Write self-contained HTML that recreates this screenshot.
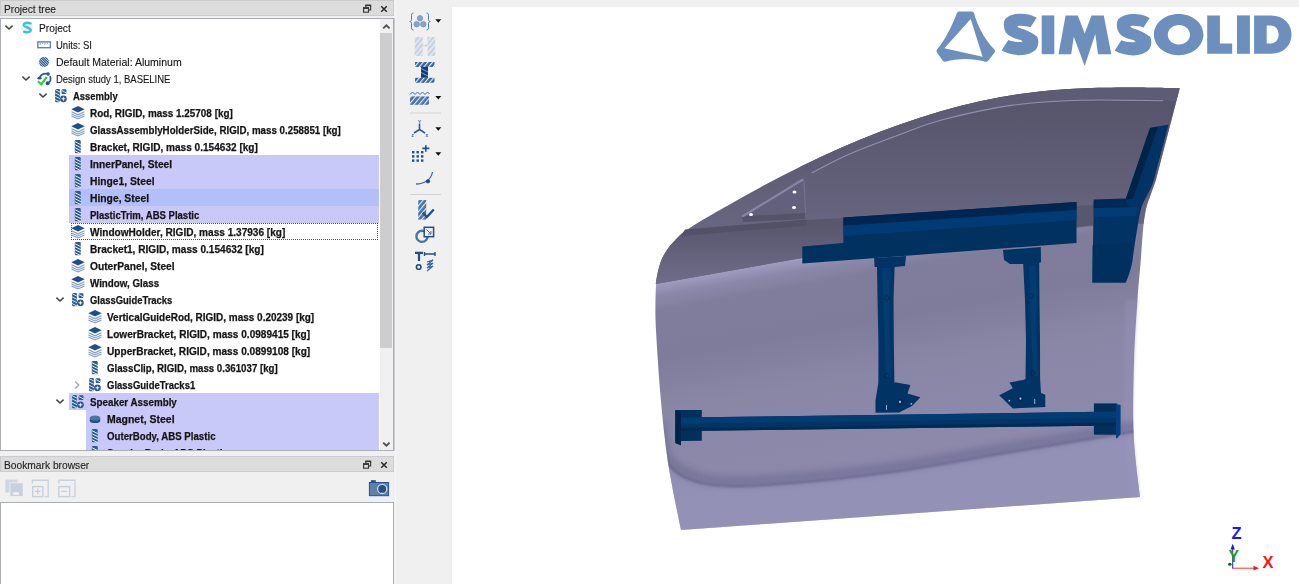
<!DOCTYPE html>
<html><head><meta charset="utf-8">
<style>
html,body{margin:0;padding:0}
body{width:1299px;height:584px;position:relative;overflow:hidden;background:#f0f0f0;font-family:"Liberation Sans",sans-serif;}
.abs{position:absolute}
.hdr{position:absolute;left:0;width:392px;height:14px;background:#dcdcdc;border:1px solid #cbcbcb}
.hdr .ht{position:absolute;left:3px;top:1px;font-size:11px;line-height:15px;color:#1e1e1e;-webkit-text-stroke:0.12px #1e1e1e;transform-origin:0 0;white-space:nowrap}
.box{position:absolute;left:0;width:392px;background:#fff;border:1px solid #abaeb6}
.t{position:absolute;font-size:11px;line-height:17px;height:17px;color:#141414;-webkit-text-stroke:0.12px #141414;white-space:nowrap;transform-origin:0 0}
.b{font-weight:bold;-webkit-text-stroke:0.25px #141414}
.bg{position:absolute;height:17px}
.focus{position:absolute;height:15px;border:1px dotted #505050}
.ic{position:absolute;overflow:visible}
</style></head><body>
<!-- Project tree header -->
<div class="hdr" style="top:0">
  <div class="ht" style="transform:scaleX(0.924)">Project tree</div>
  <svg class="ic" style="left:361px;top:3px" width="10" height="10" viewBox="0 0 10 10"><path d="M3.8,3 V1.2 H8.6 V6 H6.6" fill="none" stroke="#333" stroke-width="1.1"/><rect x="1.6" y="3.8" width="4.9" height="4.4" fill="none" stroke="#333" stroke-width="1.1"/><rect x="1.1" y="3.3" width="5.9" height="1.6" fill="#333"/><rect x="3.3" y="0.7" width="5.8" height="1.4" fill="#333"/></svg>
  <svg class="ic" style="left:378px;top:3px" width="10" height="10" viewBox="0 0 10 10"><path d="M2.2,2.2 L7.8,7.8 M7.8,2.2 L2.2,7.8" stroke="#2a2a2a" stroke-width="1.5"/></svg>
</div>
<!-- Tree box -->
<div class="box" style="top:18px;height:431px;overflow:hidden">
  <div class="abs" style="left:-1px;top:-19px;width:394px;height:470px">
<svg class="ic" style="left:4px;top:22.2px" width="10" height="10" viewBox="0 0 10 10"><path d="M1.4,3.6 L5,7 L8.6,3.6" fill="none" stroke="#454545" stroke-width="1.5"/></svg>
<svg class="ic" style="left:19px;top:19.5px" width="16" height="16" viewBox="0 0 16 16"><circle cx="8" cy="7.5" r="6" fill="#f1f2f3"/><path transform="translate(8.2,7.6) scale(0.88) translate(-8.2,-7.4)" d="M12,2.7 C8.5,1.3 4.2,1.9 4.4,4.6 C4.7,7.2 12.2,7.4 12.2,10.2 C12.2,12.7 7.5,13.2 4.8,12.1" fill="none" stroke="#3ec3d4" stroke-width="2.8" stroke-linecap="round"/></svg>
<div class="t" style="left:38.7px;top:20px;transform:scaleX(0.928)">Project</div>
<svg class="ic" style="left:36px;top:36.5px" width="16" height="16" viewBox="0 0 16 16"><rect x="1.8" y="4.9" width="12.6" height="5.8" fill="#fff" stroke="#5f83b0" stroke-width="1.4"/><path d="M4.2,5.6 v2.2 M6.6,5.6 v1.5 M9,5.6 v2.2 M11.4,5.6 v1.5" stroke="#7f9cc2" stroke-width="1"/></svg>
<div class="t" style="left:55.7px;top:37px;transform:scaleX(0.863)">Units: SI</div>
<svg class="ic" style="left:36px;top:53.5px" width="16" height="16" viewBox="0 0 16 16"><defs><clipPath id="cm"><circle cx="8" cy="8" r="4.9"/></clipPath></defs><circle cx="8" cy="8" r="4.9" fill="#2f5e96"/><g clip-path="url(#cm)" stroke="#dfe7f1" stroke-width="0.8"><path d="M0,-5 L16,11 M0,-2.5 L16,13.5 M0,0 L16,16 M0,2.5 L16,18.5 M0,5 L16,21"/></g></svg>
<div class="t" style="left:55.7px;top:54px;transform:scaleX(0.956)">Default Material: Aluminum</div>
<svg class="ic" style="left:21px;top:73.2px" width="10" height="10" viewBox="0 0 10 10"><path d="M1.4,3.6 L5,7 L8.6,3.6" fill="none" stroke="#454545" stroke-width="1.5"/></svg>
<svg class="ic" style="left:36px;top:70.5px" width="16" height="16" viewBox="0 0 16 16"><g fill="none" stroke="#215a9a" stroke-width="1.7"><path d="M3.6,6.4 C5,3.6 8.5,2.2 12,2.7"/><path d="M14,5.2 C15,7.6 14.6,10.4 12.4,12"/></g><g fill="#215a9a"><ellipse cx="3.5" cy="7.2" rx="2.1" ry="1.4"/><circle cx="12.2" cy="3" r="1.7"/><circle cx="11.6" cy="12.3" r="2"/></g><path d="M2,10.2 L5.3,13.3 L10.8,6" fill="none" stroke="#3cc83c" stroke-width="2.2"/></svg>
<div class="t" style="left:55.7px;top:71px;transform:scaleX(0.862)">Design study 1, BASELINE</div>
<svg class="ic" style="left:38px;top:90.2px" width="10" height="10" viewBox="0 0 10 10"><path d="M1.4,3.6 L5,7 L8.6,3.6" fill="none" stroke="#454545" stroke-width="1.5"/></svg>
<svg class="ic" style="left:53px;top:87.5px" width="16" height="16" viewBox="0 0 16 16"><g fill="#2a5a94"><rect x="2.1" y="1" width="4.8" height="13.2" rx="1"/><rect x="8.6" y="1.3" width="4.8" height="4.8" rx="1"/><circle cx="10.4" cy="10.8" r="3.4"/></g><path d="M2.1,1.6 L6.9,4.1 M2.1,4.9 L6.9,7.4 M2.1,8.2 L6.9,10.7 M2.1,11.5 L6.9,14 M8.6,2.4 L13.4,4.9" stroke="#f2f5fa" stroke-width="0.9"/><path d="M10.4,8.4 L11,10.2 L12.8,10.8 L11,11.4 L10.4,13.2 L9.8,11.4 L8,10.8 L9.8,10.2 Z" fill="#fff"/></svg>
<div class="t b" style="left:72.7px;top:88px;transform:scaleX(0.860)">Assembly</div>
<svg class="ic" style="left:70px;top:104.5px" width="16" height="16" viewBox="0 0 16 16"><path d="M1.3,4.3 L8,1.1 L14.7,4.3 L8,7.5 Z" fill="#1f4f88"/><path d="M1.5,6.7 L8,9.8 L14.5,6.7 M1.5,8.9 L8,12 L14.5,8.9 M1.5,11.1 L8,13.9 L14.5,11.1" fill="none" stroke="#7e9bc4" stroke-width="1.1"/></svg>
<div class="t b" style="left:89.7px;top:105px;transform:scaleX(0.902)">Rod, RIGID, mass 1.25708 [kg]</div>
<svg class="ic" style="left:70px;top:121.5px" width="16" height="16" viewBox="0 0 16 16"><path d="M1.3,4.3 L8,1.1 L14.7,4.3 L8,7.5 Z" fill="#1f4f88"/><path d="M1.5,6.7 L8,9.8 L14.5,6.7 M1.5,8.9 L8,12 L14.5,8.9 M1.5,11.1 L8,13.9 L14.5,11.1" fill="none" stroke="#7e9bc4" stroke-width="1.1"/></svg>
<div class="t b" style="left:89.7px;top:122px;transform:scaleX(0.886)">GlassAssemblyHolderSide, RIGID, mass 0.258851 [kg]</div>
<svg class="ic" style="left:70px;top:138.5px" width="16" height="16" viewBox="0 0 16 16"><rect x="4.8" y="1" width="5.9" height="13.3" rx="1.2" fill="#2b5b92"/><path d="M4.8,2.6 L10.7,5.6 M4.8,5.6 L10.7,8.6 M4.8,8.6 L10.7,11.6 M4.8,11.6 L10.7,14.6" stroke="#eef2f8" stroke-width="1"/></svg>
<div class="t b" style="left:89.7px;top:139px;transform:scaleX(0.915)">Bracket, RIGID, mass 0.154632 [kg]</div>
<div class="bg" style="left:69px;top:155px;width:310px;background:#c9c9f9"></div>
<svg class="ic" style="left:70px;top:155.5px" width="16" height="16" viewBox="0 0 16 16"><rect x="4.8" y="1" width="5.9" height="13.3" rx="1.2" fill="#2b5b92"/><path d="M4.8,2.6 L10.7,5.6 M4.8,5.6 L10.7,8.6 M4.8,8.6 L10.7,11.6 M4.8,11.6 L10.7,14.6" stroke="#eef2f8" stroke-width="1"/></svg>
<div class="t b" style="left:89.7px;top:156px;transform:scaleX(0.926)">InnerPanel, Steel</div>
<div class="bg" style="left:69px;top:172px;width:310px;background:#c9c9f9"></div>
<svg class="ic" style="left:70px;top:172.5px" width="16" height="16" viewBox="0 0 16 16"><rect x="4.8" y="1" width="5.9" height="13.3" rx="1.2" fill="#2b5b92"/><path d="M4.8,2.6 L10.7,5.6 M4.8,5.6 L10.7,8.6 M4.8,8.6 L10.7,11.6 M4.8,11.6 L10.7,14.6" stroke="#eef2f8" stroke-width="1"/></svg>
<div class="t b" style="left:89.7px;top:173px;transform:scaleX(0.935)">Hinge1, Steel</div>
<div class="bg" style="left:69px;top:189px;width:310px;background:#b3bff9"></div>
<svg class="ic" style="left:70px;top:189.5px" width="16" height="16" viewBox="0 0 16 16"><rect x="4.8" y="1" width="5.9" height="13.3" rx="1.2" fill="#2b5b92"/><path d="M4.8,2.6 L10.7,5.6 M4.8,5.6 L10.7,8.6 M4.8,8.6 L10.7,11.6 M4.8,11.6 L10.7,14.6" stroke="#eef2f8" stroke-width="1"/></svg>
<div class="t b" style="left:89.7px;top:190px;transform:scaleX(0.937)">Hinge, Steel</div>
<div class="bg" style="left:69px;top:206px;width:310px;background:#c9c9f9"></div>
<svg class="ic" style="left:70px;top:206.5px" width="16" height="16" viewBox="0 0 16 16"><rect x="4.8" y="1" width="5.9" height="13.3" rx="1.2" fill="#2b5b92"/><path d="M4.8,2.6 L10.7,5.6 M4.8,5.6 L10.7,8.6 M4.8,8.6 L10.7,11.6 M4.8,11.6 L10.7,14.6" stroke="#eef2f8" stroke-width="1"/></svg>
<div class="t b" style="left:89.7px;top:207px;transform:scaleX(0.866)">PlasticTrim, ABS Plastic</div>
<div class="focus" style="left:71px;top:223px;width:305px"></div>
<svg class="ic" style="left:70px;top:223.5px" width="16" height="16" viewBox="0 0 16 16"><path d="M1.3,4.3 L8,1.1 L14.7,4.3 L8,7.5 Z" fill="#1f4f88"/><path d="M1.5,6.7 L8,9.8 L14.5,6.7 M1.5,8.9 L8,12 L14.5,8.9 M1.5,11.1 L8,13.9 L14.5,11.1" fill="none" stroke="#7e9bc4" stroke-width="1.1"/></svg>
<div class="t b" style="left:89.7px;top:224px;transform:scaleX(0.916)">WindowHolder, RIGID, mass 1.37936 [kg]</div>
<svg class="ic" style="left:70px;top:240.5px" width="16" height="16" viewBox="0 0 16 16"><rect x="4.8" y="1" width="5.9" height="13.3" rx="1.2" fill="#2b5b92"/><path d="M4.8,2.6 L10.7,5.6 M4.8,5.6 L10.7,8.6 M4.8,8.6 L10.7,11.6 M4.8,11.6 L10.7,14.6" stroke="#eef2f8" stroke-width="1"/></svg>
<div class="t b" style="left:89.7px;top:241px;transform:scaleX(0.917)">Bracket1, RIGID, mass 0.154632 [kg]</div>
<svg class="ic" style="left:70px;top:257.5px" width="16" height="16" viewBox="0 0 16 16"><path d="M1.3,4.3 L8,1.1 L14.7,4.3 L8,7.5 Z" fill="#1f4f88"/><path d="M1.5,6.7 L8,9.8 L14.5,6.7 M1.5,8.9 L8,12 L14.5,8.9 M1.5,11.1 L8,13.9 L14.5,11.1" fill="none" stroke="#7e9bc4" stroke-width="1.1"/></svg>
<div class="t b" style="left:89.7px;top:258px;transform:scaleX(0.929)">OuterPanel, Steel</div>
<svg class="ic" style="left:70px;top:274.5px" width="16" height="16" viewBox="0 0 16 16"><path d="M1.3,4.3 L8,1.1 L14.7,4.3 L8,7.5 Z" fill="#1f4f88"/><path d="M1.5,6.7 L8,9.8 L14.5,6.7 M1.5,8.9 L8,12 L14.5,8.9 M1.5,11.1 L8,13.9 L14.5,11.1" fill="none" stroke="#7e9bc4" stroke-width="1.1"/></svg>
<div class="t b" style="left:89.7px;top:275px;transform:scaleX(0.890)">Window, Glass</div>
<svg class="ic" style="left:55px;top:294.2px" width="10" height="10" viewBox="0 0 10 10"><path d="M1.4,3.6 L5,7 L8.6,3.6" fill="none" stroke="#454545" stroke-width="1.5"/></svg>
<svg class="ic" style="left:70px;top:291.5px" width="16" height="16" viewBox="0 0 16 16"><g fill="#2a5a94"><rect x="2.1" y="1" width="4.8" height="13.2" rx="1"/><rect x="8.6" y="1.3" width="4.8" height="4.8" rx="1"/><circle cx="10.4" cy="10.8" r="3.4"/></g><path d="M2.1,1.6 L6.9,4.1 M2.1,4.9 L6.9,7.4 M2.1,8.2 L6.9,10.7 M2.1,11.5 L6.9,14 M8.6,2.4 L13.4,4.9" stroke="#f2f5fa" stroke-width="0.9"/><path d="M10.4,8.4 L11,10.2 L12.8,10.8 L11,11.4 L10.4,13.2 L9.8,11.4 L8,10.8 L9.8,10.2 Z" fill="#fff"/></svg>
<div class="t b" style="left:89.7px;top:292px;transform:scaleX(0.858)">GlassGuideTracks</div>
<svg class="ic" style="left:87px;top:308.5px" width="16" height="16" viewBox="0 0 16 16"><path d="M1.3,4.3 L8,1.1 L14.7,4.3 L8,7.5 Z" fill="#1f4f88"/><path d="M1.5,6.7 L8,9.8 L14.5,6.7 M1.5,8.9 L8,12 L14.5,8.9 M1.5,11.1 L8,13.9 L14.5,11.1" fill="none" stroke="#7e9bc4" stroke-width="1.1"/></svg>
<div class="t b" style="left:106.7px;top:309px;transform:scaleX(0.906)">VerticalGuideRod, RIGID, mass 0.20239 [kg]</div>
<svg class="ic" style="left:87px;top:325.5px" width="16" height="16" viewBox="0 0 16 16"><path d="M1.3,4.3 L8,1.1 L14.7,4.3 L8,7.5 Z" fill="#1f4f88"/><path d="M1.5,6.7 L8,9.8 L14.5,6.7 M1.5,8.9 L8,12 L14.5,8.9 M1.5,11.1 L8,13.9 L14.5,11.1" fill="none" stroke="#7e9bc4" stroke-width="1.1"/></svg>
<div class="t b" style="left:106.7px;top:326px;transform:scaleX(0.915)">LowerBracket, RIGID, mass 0.0989415 [kg]</div>
<svg class="ic" style="left:87px;top:342.5px" width="16" height="16" viewBox="0 0 16 16"><path d="M1.3,4.3 L8,1.1 L14.7,4.3 L8,7.5 Z" fill="#1f4f88"/><path d="M1.5,6.7 L8,9.8 L14.5,6.7 M1.5,8.9 L8,12 L14.5,8.9 M1.5,11.1 L8,13.9 L14.5,11.1" fill="none" stroke="#7e9bc4" stroke-width="1.1"/></svg>
<div class="t b" style="left:106.7px;top:343px;transform:scaleX(0.918)">UpperBracket, RIGID, mass 0.0899108 [kg]</div>
<svg class="ic" style="left:87px;top:359.5px" width="16" height="16" viewBox="0 0 16 16"><rect x="4.8" y="1" width="5.9" height="13.3" rx="1.2" fill="#2b5b92"/><path d="M4.8,2.6 L10.7,5.6 M4.8,5.6 L10.7,8.6 M4.8,8.6 L10.7,11.6 M4.8,11.6 L10.7,14.6" stroke="#eef2f8" stroke-width="1"/></svg>
<div class="t b" style="left:106.7px;top:360px;transform:scaleX(0.881)">GlassClip, RIGID, mass 0.361037 [kg]</div>
<svg class="ic" style="left:72px;top:379.8px" width="10" height="10" viewBox="0 0 10 10"><path d="M3.2,1.4 L6.8,5 L3.2,8.6" fill="none" stroke="#a8a8a8" stroke-width="1.4"/></svg>
<svg class="ic" style="left:87px;top:376.5px" width="16" height="16" viewBox="0 0 16 16"><g fill="#2a5a94"><rect x="2.1" y="1" width="4.8" height="13.2" rx="1"/><rect x="8.6" y="1.3" width="4.8" height="4.8" rx="1"/><circle cx="10.4" cy="10.8" r="3.4"/></g><path d="M2.1,1.6 L6.9,4.1 M2.1,4.9 L6.9,7.4 M2.1,8.2 L6.9,10.7 M2.1,11.5 L6.9,14 M8.6,2.4 L13.4,4.9" stroke="#f2f5fa" stroke-width="0.9"/><path d="M10.4,8.4 L11,10.2 L12.8,10.8 L11,11.4 L10.4,13.2 L9.8,11.4 L8,10.8 L9.8,10.2 Z" fill="#fff"/></svg>
<div class="t b" style="left:106.7px;top:377px;transform:scaleX(0.864)">GlassGuideTracks1</div>
<div class="bg" style="left:69px;top:393px;width:310px;background:#c9c9f9"></div>
<svg class="ic" style="left:55px;top:396.2px" width="10" height="10" viewBox="0 0 10 10"><path d="M1.4,3.6 L5,7 L8.6,3.6" fill="none" stroke="#454545" stroke-width="1.5"/></svg>
<svg class="ic" style="left:70px;top:393.5px" width="16" height="16" viewBox="0 0 16 16"><g fill="#2a5a94"><rect x="2.1" y="1" width="4.8" height="13.2" rx="1"/><rect x="8.6" y="1.3" width="4.8" height="4.8" rx="1"/><circle cx="10.4" cy="10.8" r="3.4"/></g><path d="M2.1,1.6 L6.9,4.1 M2.1,4.9 L6.9,7.4 M2.1,8.2 L6.9,10.7 M2.1,11.5 L6.9,14 M8.6,2.4 L13.4,4.9" stroke="#f2f5fa" stroke-width="0.9"/><path d="M10.4,8.4 L11,10.2 L12.8,10.8 L11,11.4 L10.4,13.2 L9.8,11.4 L8,10.8 L9.8,10.2 Z" fill="#fff"/></svg>
<div class="t b" style="left:89.7px;top:394px;transform:scaleX(0.891)">Speaker Assembly</div>
<div class="bg" style="left:86px;top:410px;width:293px;background:#c9c9f9"></div>
<svg class="ic" style="left:87px;top:410.5px" width="16" height="16" viewBox="0 0 16 16"><ellipse cx="8" cy="9.5" rx="5.2" ry="2.6" fill="#1f4f88"/><rect x="2.8" y="7" width="10.4" height="2.5" fill="#1f4f88"/><ellipse cx="8" cy="7" rx="5.2" ry="2.6" fill="#4a74a8"/></svg>
<div class="t b" style="left:106.7px;top:411px;transform:scaleX(0.953)">Magnet, Steel</div>
<div class="bg" style="left:86px;top:427px;width:293px;background:#c9c9f9"></div>
<svg class="ic" style="left:87px;top:427.5px" width="16" height="16" viewBox="0 0 16 16"><rect x="4.8" y="1" width="5.9" height="13.3" rx="1.2" fill="#2b5b92"/><path d="M4.8,2.6 L10.7,5.6 M4.8,5.6 L10.7,8.6 M4.8,8.6 L10.7,11.6 M4.8,11.6 L10.7,14.6" stroke="#eef2f8" stroke-width="1"/></svg>
<div class="t b" style="left:106.7px;top:428px;transform:scaleX(0.879)">OuterBody, ABS Plastic</div>
<div class="bg" style="left:86px;top:444px;width:293px;background:#c9c9f9"></div>
<svg class="ic" style="left:87px;top:444.5px" width="16" height="16" viewBox="0 0 16 16"><rect x="4.8" y="1" width="5.9" height="13.3" rx="1.2" fill="#2b5b92"/><path d="M4.8,2.6 L10.7,5.6 M4.8,5.6 L10.7,8.6 M4.8,8.6 L10.7,11.6 M4.8,11.6 L10.7,14.6" stroke="#eef2f8" stroke-width="1"/></svg>
<div class="t b" style="left:106.7px;top:445px;transform:scaleX(0.882)">SpeakerBody, ABS Plastic</div>
  </div>
  <!-- scrollbar -->
  <div class="abs" style="left:379px;top:0;width:13px;height:431px;background:#f0f0f0"></div>
  <svg class="ic" style="left:381px;top:3px" width="10" height="10" viewBox="0 0 10 10"><path d="M1.2,6.4 L4.4,3.3 L7.6,6.4" fill="none" stroke="#505050" stroke-width="1.9"/></svg>
  <div class="abs" style="left:379px;top:14px;width:12px;height:315px;background:#cdcdcd"></div>
  <svg class="ic" style="left:381px;top:420px" width="10" height="10" viewBox="0 0 10 10"><path d="M1.2,3.6 L4.4,6.7 L7.6,3.6" fill="none" stroke="#505050" stroke-width="1.9"/></svg>
</div>
<div class="abs" style="left:394px;top:18px;width:1px;height:433px;background:#c6c8ce"></div>
<div class="abs" style="left:395px;top:0;width:1px;height:584px;background:#f6f6f4"></div>
<!-- Bookmark header -->
<div class="hdr" style="top:456px">
  <div class="ht" style="transform:scaleX(0.930)">Bookmark browser</div>
  <svg class="ic" style="left:361px;top:3px" width="10" height="10" viewBox="0 0 10 10"><path d="M3.8,3 V1.2 H8.6 V6 H6.6" fill="none" stroke="#333" stroke-width="1.1"/><rect x="1.6" y="3.8" width="4.9" height="4.4" fill="none" stroke="#333" stroke-width="1.1"/><rect x="1.1" y="3.3" width="5.9" height="1.6" fill="#333"/><rect x="3.3" y="0.7" width="5.8" height="1.4" fill="#333"/></svg>
  <svg class="ic" style="left:378px;top:3px" width="10" height="10" viewBox="0 0 10 10"><path d="M2.2,2.2 L7.8,7.8 M7.8,2.2 L2.2,7.8" stroke="#2a2a2a" stroke-width="1.5"/></svg>
</div>
<!-- bookmark toolbar -->
<svg class="ic" style="left:4px;top:479px" width="20" height="19" viewBox="0 0 20 19"><rect x="1.3" y="0.6" width="12.3" height="12.9" fill="#cdd7e3"/><rect x="5.6" y="3.4" width="13.9" height="14.3" fill="#f0f0f0"/><rect x="6.4" y="4.2" width="12.3" height="12.9" fill="#c6d1de"/><rect x="9" y="13.2" width="6" height="2.6" fill="#eef1f5"/></svg>
<svg class="ic" style="left:31px;top:479px" width="20" height="19" viewBox="0 0 20 19"><path d="M1.3,4.5 V1.3 H17.2 V17.6 H13.5" fill="none" stroke="#c8d2de" stroke-width="1.4"/><rect x="1.7" y="7.6" width="10.1" height="10" fill="none" stroke="#c5d0dc" stroke-width="1.4"/><path d="M6.7,9.6 v5.6 M3.9,12.4 h5.6" stroke="#c5d0dc" stroke-width="1.4"/></svg>
<svg class="ic" style="left:57px;top:479px" width="20" height="19" viewBox="0 0 20 19"><path d="M1.9,4.5 V1.3 H18 V17.6 H14.2" fill="none" stroke="#c8d2de" stroke-width="1.4"/><rect x="1.9" y="7.6" width="10.7" height="10" fill="none" stroke="#c5d0dc" stroke-width="1.4"/><path d="M4.2,12.4 h6" stroke="#c5d0dc" stroke-width="1.4"/></svg>
<svg class="ic" style="left:368px;top:479px" width="22" height="18" viewBox="0 0 22 18"><rect x="1.4" y="3.5" width="19.2" height="13.2" fill="#5e80a8" stroke="#24508a" stroke-width="1"/><rect x="2.8" y="1.2" width="5" height="2.6" fill="#24508a"/><circle cx="14.2" cy="9.9" r="4.6" fill="#24508a" stroke="#cbd6e4" stroke-width="1.3"/></svg>
<div class="box" style="top:502px;height:90px"></div>

<!-- viewport -->
<div class="abs" style="left:452px;top:7px;width:847px;height:577px;background:#fff"></div>
<svg class="abs" style="left:0;top:0" width="1299" height="584" viewBox="0 0 1299 584">
<defs>
  <linearGradient id="gLow" x1="700" y1="275" x2="744.5" y2="525" gradientUnits="userSpaceOnUse">
    <stop offset="0" stop-color="#a29ec2"/>
    <stop offset="0.05" stop-color="#8b88aa"/>
    <stop offset="0.11" stop-color="#807d9c"/>
    <stop offset="0.3" stop-color="#7f7c9b"/>
    <stop offset="0.5" stop-color="#8986a6"/>
    <stop offset="1" stop-color="#8e8bae"/>
  </linearGradient>
  <linearGradient id="gUp" x1="0" y1="95" x2="0" y2="225" gradientUnits="userSpaceOnUse">
    <stop offset="0" stop-color="#56546b"/>
    <stop offset="1" stop-color="#67657f"/>
  </linearGradient>
  <linearGradient id="gMid" x1="0" y1="225" x2="0" y2="283" gradientUnits="userSpaceOnUse">
    <stop offset="0" stop-color="#59576e"/>
    <stop offset="1" stop-color="#6e6c88"/>
  </linearGradient>
  <linearGradient id="gShadow" x1="0" y1="0" x2="0" y2="1">
    <stop offset="0" stop-color="#55537a" stop-opacity="0"/>
    <stop offset="0.55" stop-color="#55537a" stop-opacity="0.5"/>
    <stop offset="1" stop-color="#55537a" stop-opacity="0"/>
  </linearGradient>
  <linearGradient id="gEdgeR" x1="1110" y1="0" x2="1140" y2="0" gradientUnits="userSpaceOnUse">
    <stop offset="0" stop-color="#8c8ab0" stop-opacity="0"/>
    <stop offset="0.6" stop-color="#6e6c90" stop-opacity="0.6"/>
    <stop offset="1" stop-color="#a09ec6" stop-opacity="0.8"/>
  </linearGradient>
  <filter id="blur05" x="-20%" y="-50%" width="140%" height="200%"><feGaussianBlur stdDeviation="0.8"/></filter>
  <filter id="blur1" x="-20%" y="-20%" width="140%" height="140%"><feGaussianBlur stdDeviation="1.5"/></filter>
  <filter id="blur3" x="-20%" y="-50%" width="140%" height="200%"><feGaussianBlur stdDeviation="3.5"/></filter>
  <clipPath id="doorClip"><path d="M1179.7,88.3 L1155.9,180 C1155.1,182.3 1152.6,189.1 1151.0,193.7 C1149.4,198.3 1147.5,202.4 1146.3,207.4 C1145.1,212.4 1144.5,215.0 1143.6,223.8 C1142.7,232.6 1141.8,247.3 1140.8,260.0 C1139.8,272.7 1138.6,283.0 1137.5,300.0 C1136.4,317.0 1134.6,339.3 1134.0,362.0 C1133.4,384.7 1132.7,413.5 1133.7,436.0 C1134.7,458.5 1139.0,486.8 1140.0,497.0 L681,530 C679.3,521.7 673.7,495.0 671.0,480.0 C668.3,465.0 666.8,455.0 665.0,440.0 C663.2,425.0 661.5,408.3 660.0,390.0 C658.5,371.7 656.8,345.0 656.0,330.0 C655.2,315.0 655.4,308.3 655.5,300.0 C655.6,291.7 655.8,286.2 656.6,280.0 C657.4,273.8 658.7,267.7 660.4,262.8 C662.1,257.9 664.0,254.3 666.6,250.5 C669.2,246.7 672.2,243.2 675.8,239.7 C679.4,236.1 680.6,234.1 688.0,229.2 C695.4,224.3 708.0,217.0 720.0,210.1 C732.0,203.2 746.7,194.9 760.0,187.7 C773.3,180.5 786.7,173.6 800.0,167.0 C813.3,160.4 826.7,154.2 840.0,148.3 C853.3,142.4 866.7,136.9 880.0,131.8 C893.3,126.7 906.7,122.0 920.0,117.7 C933.3,113.4 946.7,109.5 960.0,106.1 C973.3,102.7 986.7,99.7 1000.0,97.2 C1013.3,94.8 1026.7,92.9 1040.0,91.4 C1053.3,90.0 1065.0,89.1 1080.0,88.5 C1095.0,87.9 1113.4,87.6 1130.0,87.6 C1146.6,87.6 1171.4,88.2 1179.7,88.3 Z"/></clipPath>
</defs>
<!-- door silhouette (lower) -->
<path d="M1179.7,88.3 L1155.9,180 C1155.1,182.3 1152.6,189.1 1151.0,193.7 C1149.4,198.3 1147.5,202.4 1146.3,207.4 C1145.1,212.4 1144.5,215.0 1143.6,223.8 C1142.7,232.6 1141.8,247.3 1140.8,260.0 C1139.8,272.7 1138.6,283.0 1137.5,300.0 C1136.4,317.0 1134.6,339.3 1134.0,362.0 C1133.4,384.7 1132.7,413.5 1133.7,436.0 C1134.7,458.5 1139.0,486.8 1140.0,497.0 L681,530 C679.3,521.7 673.7,495.0 671.0,480.0 C668.3,465.0 666.8,455.0 665.0,440.0 C663.2,425.0 661.5,408.3 660.0,390.0 C658.5,371.7 656.8,345.0 656.0,330.0 C655.2,315.0 655.4,308.3 655.5,300.0 C655.6,291.7 655.8,286.2 656.6,280.0 C657.4,273.8 658.7,267.7 660.4,262.8 C662.1,257.9 664.0,254.3 666.6,250.5 C669.2,246.7 672.2,243.2 675.8,239.7 C679.4,236.1 680.6,234.1 688.0,229.2 C695.4,224.3 708.0,217.0 720.0,210.1 C732.0,203.2 746.7,194.9 760.0,187.7 C773.3,180.5 786.7,173.6 800.0,167.0 C813.3,160.4 826.7,154.2 840.0,148.3 C853.3,142.4 866.7,136.9 880.0,131.8 C893.3,126.7 906.7,122.0 920.0,117.7 C933.3,113.4 946.7,109.5 960.0,106.1 C973.3,102.7 986.7,99.7 1000.0,97.2 C1013.3,94.8 1026.7,92.9 1040.0,91.4 C1053.3,90.0 1065.0,89.1 1080.0,88.5 C1095.0,87.9 1113.4,87.6 1130.0,87.6 C1146.6,87.6 1171.4,88.2 1179.7,88.3 Z" fill="url(#gLow)"/>
<!-- right edge shading -->
<path d="M1125,300 C1124,360 1123,400 1125,440 L1131,497 L1140,497 L1133.5,436 C1132,400 1135,350 1138,300 Z" fill="#9896be" opacity="0.35" filter="url(#blur1)"/>
<!-- upper dark region -->
<path d="M655.8,284 C655.9,283.3 655.8,283.5 656.6,280.0 C657.4,276.5 658.7,267.7 660.4,262.8 C662.1,257.9 664.0,254.3 666.6,250.5 C669.2,246.7 672.2,243.2 675.8,239.7 C679.4,236.1 680.6,234.1 688.0,229.2 C695.4,224.3 708.0,217.0 720.0,210.1 C732.0,203.2 746.7,194.9 760.0,187.7 C773.3,180.5 786.7,173.6 800.0,167.0 C813.3,160.4 826.7,154.2 840.0,148.3 C853.3,142.4 866.7,136.9 880.0,131.8 C893.3,126.7 906.7,122.0 920.0,117.7 C933.3,113.4 946.7,109.5 960.0,106.1 C973.3,102.7 986.7,99.7 1000.0,97.2 C1013.3,94.8 1026.7,92.9 1040.0,91.4 C1053.3,90.0 1065.0,89.1 1080.0,88.5 C1095.0,87.9 1113.4,87.6 1130.0,87.6 C1146.6,87.6 1171.4,88.2 1179.7,88.3 L1155.9,180 C1155.1,182.3 1152.6,189.1 1151.0,193.7 C1149.4,198.3 1147.5,202.4 1146.3,207.4 C1145.1,212.4 1144.0,221.1 1143.6,223.8 L1093,226 L802,258 Z" fill="url(#gUp)"/>
<!-- mid gradient band below lip -->
<path d="M686,230 L806,220 L1093,205 L1093,225 L802,258 L655.8,284 C656.5,276 659,265 663,257 C668,247 677,237 686,230 Z" fill="url(#gMid)"/>
<path d="M685,229.6 L806.9,219.5 L806.9,225.5 L681,236 Z" fill="#535168"/>
<!-- rim line -->
<path d="M800.0,167.0 C806.7,163.9 826.7,154.2 840.0,148.3 C853.3,142.4 866.7,136.9 880.0,131.8 C893.3,126.7 906.7,122.0 920.0,117.7 C933.3,113.4 946.7,109.5 960.0,106.1 C973.3,102.7 986.7,99.7 1000.0,97.2 C1013.3,94.8 1026.7,92.9 1040.0,91.4 C1053.3,90.0 1065.0,89.1 1080.0,88.5 C1095.0,87.9 1113.4,87.6 1130.0,87.6 C1146.6,87.6 1171.4,88.2 1179.7,88.3 L1176,101 L1163,100.8 C1149.2,100.7 1105.3,99.5 1080.0,100.3 C1054.7,101.1 1034.0,102.1 1011.0,105.4 C988.0,108.7 960.2,115.2 941.7,120.0 C923.2,124.8 915.5,128.8 900.0,134.5 C884.5,140.2 863.2,148.1 848.5,154.5 C833.8,160.9 817.7,169.9 811.5,173.0 Z" fill="#5e5c74"/>
<path d="M811.5,173.0 C817.7,169.9 833.8,160.9 848.5,154.5 C863.2,148.1 884.5,140.2 900.0,134.5 C915.5,128.8 923.2,124.8 941.7,120.0 C960.2,115.2 988.0,108.7 1011.0,105.4 C1034.0,102.1 1054.7,101.1 1080.0,100.3 C1105.3,99.5 1149.2,100.7 1163.0,100.8" fill="none" stroke="#9391b3" stroke-width="1.1"/>
<!-- triangle plate -->
<path d="M742.2,216.2 L802.8,179.2 L804.9,213.1 Z" fill="#62607a"/>
<path d="M742.2,216.2 L743,222 L805,219 L804.9,213.1 Z" fill="#55536a"/>
<path d="M743,216 L802.5,179.8" stroke="#8785a6" stroke-width="2.2" stroke-linecap="round"/>
<path d="M804,180 L805.5,213" stroke="#77758f" stroke-width="1"/>
<ellipse cx="751" cy="214.5" rx="2" ry="1.5" fill="#fff"/><ellipse cx="794.5" cy="192" rx="2" ry="1.5" fill="#fff"/><ellipse cx="794" cy="207.5" rx="2" ry="1.5" fill="#fff"/>
<!-- lower shadow crease -->
<g clip-path="url(#doorClip)">
<path d="M660.0,430.0 C661.5,435.7 661.9,455.6 668.8,464.4 C675.7,473.2 685.9,479.5 701.6,482.9 C717.4,486.3 732.5,486.7 763.3,485.0 C794.1,483.3 845.5,478.1 886.6,472.6 C927.7,467.1 968.9,458.9 1010.0,452.0 C1051.1,445.1 1110.5,435.2 1133.0,431.5 C1155.5,427.8 1143.0,429.8 1145.0,429.5 L1145,520 L650,545 Z" fill="#9a98c0" opacity="0.5" filter="url(#blur1)"/>
<path d="M660.0,425.0 C661.5,430.7 661.9,450.6 668.8,459.4 C675.7,468.2 685.9,474.5 701.6,477.9 C717.4,481.3 732.5,481.7 763.3,480.0 C794.1,478.3 845.5,473.1 886.6,467.6 C927.7,462.1 968.9,453.9 1010.0,447.0 C1051.1,440.1 1110.5,430.2 1133.0,426.5 C1155.5,422.8 1143.0,424.8 1145.0,424.5" fill="none" stroke="#5c5a84" stroke-width="9" opacity="0.45" filter="url(#blur3)"/>
<path d="M660.0,430.0 C661.5,435.7 661.9,455.6 668.8,464.4 C675.7,473.2 685.9,479.5 701.6,482.9 C717.4,486.3 732.5,486.7 763.3,485.0 C794.1,483.3 845.5,478.1 886.6,472.6 C927.7,467.1 968.9,458.9 1010.0,452.0 C1051.1,445.1 1110.5,435.2 1133.0,431.5 C1155.5,427.8 1143.0,429.8 1145.0,429.5" fill="none" stroke="#646289" stroke-width="2" opacity="0.8" filter="url(#blur05)"/>
</g>
<!-- blue horizontal bar -->
<path d="M843.4,217.6 L1076.5,202 L1076.5,243 L802.3,263.5 L802.3,246.4 L843.4,243 Z" fill="#00315f"/>
<path d="M843.4,217.6 L1076.5,202 L1076.5,210 L843.4,225.8 Z" fill="#002550"/>
<path d="M843.4,225.8 L1076.5,210 L1076.5,220 L843.4,236 Z" fill="#003b76"/>
<!-- left strut -->
<path d="M874.2,258 L906,256 L905,266 L894.6,267 L893.5,300 L893.8,340 L894.4,382.6 L896.2,382.6 L910.4,385 L907.5,393.4 L920.3,397.2 L912,406 L899,412.5 L875.5,412.7 L875.5,400.5 L878.4,382.6 L878.4,340 L877.5,300 L877,267 L874.5,267 Z" fill="#013465"/>
<path d="M882,268 L890,268 L889.5,330 L891,378 L886,378 L884.5,330 Z" fill="#02427c" opacity="0.6"/>
<circle cx="886.5" cy="298" r="2.2" fill="none" stroke="#00264c" stroke-width="0.8"/>
<circle cx="887" cy="375.5" r="2.3" fill="none" stroke="#00264c" stroke-width="0.8"/>
<circle cx="900" cy="401.9" r="2.6" fill="none" stroke="#00264c" stroke-width="0.8"/>
<circle cx="900" cy="401.9" r="1.1" fill="#b8bcd8"/>
<circle cx="911.3" cy="403.8" r="0.9" fill="#b8bcd8"/>
<path d="M886.5,405 V410" stroke="#b8bcd8" stroke-width="0.9"/>
<!-- right strut -->
<path d="M1003,250 L1040.8,247 L1041,262 L1039.2,263 L1039.5,300 L1040,340 L1040.1,378.8 L1041,393 L1045.3,394.8 L1045.3,407 L1012.8,408.5 L999.2,395.3 L1012.8,388.2 L1009.5,382.6 L1024.1,379.8 L1025.5,378.8 L1026,340 L1025,300 L1023.2,264 L1010,264 L1004,260 Z" fill="#013465"/>
<path d="M1029,266 L1036,266 L1036.5,330 L1038,376 L1033,376 L1031,330 Z" fill="#02427c" opacity="0.6"/>
<circle cx="1031.5" cy="296" r="2.2" fill="none" stroke="#00264c" stroke-width="0.8"/>
<circle cx="1032.5" cy="373" r="2.3" fill="none" stroke="#00264c" stroke-width="0.8"/>
<circle cx="1020.4" cy="398.6" r="2.6" fill="none" stroke="#00264c" stroke-width="0.8"/>
<circle cx="1020.4" cy="398.6" r="1.1" fill="#b8bcd8"/>
<circle cx="1009.4" cy="400.7" r="0.9" fill="#b8bcd8"/>
<path d="M1034.7,399 V404" stroke="#b8bcd8" stroke-width="0.9"/>
<!-- rod -->
<path d="M675.3,410 L701.8,409.9 L701.8,440.7 L681,441 L681,445.3 L675.3,443 Z" fill="#01305d"/>
<path d="M1093.9,403.4 L1117,403.4 L1117,434.7 L1093.9,434.7 Z" fill="#012f5b"/>
<path d="M678,417.6 L1117,411.6 L1117,425.5 L678,431 Z" fill="#013566"/>
<path d="M678,417.6 L1117,411.6 L1117,418 L678,423.8 Z" fill="#023c73"/>
<path d="M678,428 L1117,422.5 L1117,425.5 L678,431 Z" fill="#002a52"/>
<path d="M675.3,410 L681,412 L681,445.3 L675.3,443 Z" fill="#00234a"/>
<path d="M1116,404 L1120.6,405 L1120.6,434 L1117,438.5 L1116,438 Z" fill="#024080"/>
<!-- right vertical bracket -->
<path d="M1150,127.9 L1168.5,124.6 L1153.8,180 C1152,186 1150,190 1148,193.7 C1145,199 1143,203 1141.5,207 C1140,212 1139,218 1138,224 C1136,236 1134,248 1132.6,260 C1131,270 1128,278 1125.6,282.5 L1092.4,282.5 L1093.7,201.1 L1125.6,199.5 Z" fill="#013465"/>
<path d="M1150,127.9 L1158,126.5 L1133,199 L1125.6,199.5 Z" fill="#002448"/>
<path d="M1093.7,199.5 L1125.6,198.5 L1129,207.4 L1093.5,208 Z" fill="#002a55"/>
<path d="M1093.5,208 L1129,207.4 L1137,207 L1136,216 L1093.5,217 Z" fill="#023f7c" opacity="0.8"/>
<path d="M1092.6,245 L1132,243 C1131,262 1128,275 1125.6,282.5 L1092.4,282.5 Z" fill="#00305e"/>
</svg>
<svg class="abs" style="left:0;top:0" width="1299" height="584" viewBox="0 0 1299 584">
<g fill="#6c8fbe">
  <path fill-rule="evenodd" d="M958.8,11.5 L972.2,11.5 Q973.5,11.5 974,13 C977,24 983,38 994.6,49.7 Q995.5,51 994.6,52.5 L988,61 Q987,62 985.5,61.7 C972,58 958,58 945.5,61.7 Q944,62 943,61 L936.8,52.2 Q936,50.8 937,49.5 C945,40 951,28 957,13 Q957.5,11.5 958.8,11.5 Z M970.7,18.9 L944.4,48.2 L982.6,56.7 Z"/>
  <path d="M1036.7,17.8 L1030.5,27.3 C1027,26.2 1022,25 1017.3,26 L1018.6,27.7 C1024,29.2 1030,31 1036.7,36.3 C1039,39 1039,46 1035.8,49.5 C1033,53 1026,55.2 1020.2,55.2 C1014,55.2 1006,53 1001.7,50.3 L1008.3,40 C1012,41.5 1018,42.5 1022.7,41.7 L1021,40 C1016,39 1011,37 1007.9,34.7 C1005,32 1003.8,28 1003.8,24.8 C1003.8,21 1005,18.5 1006.2,18.2 C1009,15.5 1014,13.7 1021,13.7 C1026,13.7 1031,14.5 1036.7,17.8 Z"/>
  <path transform="translate(113,0.2)" d="M1036.7,17.8 L1030.5,27.3 C1027,26.2 1022,25 1017.3,26 L1018.6,27.7 C1024,29.2 1030,31 1036.7,36.3 C1039,39 1039,46 1035.8,49.5 C1033,53 1026,55.2 1020.2,55.2 C1014,55.2 1006,53 1001.7,50.3 L1008.3,40 C1012,41.5 1018,42.5 1022.7,41.7 L1021,40 C1016,39 1011,37 1007.9,34.7 C1005,32 1003.8,28 1003.8,24.8 C1003.8,21 1005,18.5 1006.2,18.2 C1009,15.5 1014,13.7 1021,13.7 C1026,13.7 1031,14.5 1036.7,17.8 Z"/>
  <rect x="1041.7" y="15.4" width="12.6" height="38.8"/>
  <path d="M1058.5,54.2 L1065.6,15.4 L1077.8,15.4 L1084.7,33.5 L1091.5,15.4 L1103.8,15.4 L1111.3,54.2 L1098,54.2 L1095.3,34 L1084.7,65.9 L1073.8,36.7 L1071.2,54.2 Z"/>
  <path fill-rule="evenodd" d="M1178.65,14 C1192.5,14 1203.4,23 1203.4,34.6 C1203.4,46.2 1192.5,55.2 1178.65,55.2 C1164.8,55.2 1153.9,46.2 1153.9,34.6 C1153.9,23 1164.8,14 1178.65,14 Z M1178.9,25.1 C1172.7,25.1 1167.8,29.4 1167.8,34.8 C1167.8,40.2 1172.7,44.5 1178.9,44.5 C1185.1,44.5 1190,40.2 1190,34.8 C1190,29.4 1185.1,25.1 1178.9,25.1 Z"/>
  <path d="M1207.2,15.4 H1219.9 V43.6 H1232.2 V53.8 H1207.2 Z"/>
  <rect x="1237" y="15.4" width="12.9" height="38.4"/>
  <path fill-rule="evenodd" d="M1254.1,15.4 H1271 C1284,15.4 1291.5,24 1291.5,34.6 C1291.5,45.2 1284,53.8 1271,53.8 H1254.1 Z M1266.7,25.6 H1270.5 C1275.5,25.6 1278.6,29.5 1278.6,34.6 C1278.6,39.7 1275.5,43.6 1270.5,43.6 H1266.7 Z"/>
</g>
<!-- axes -->
<g>
  <path d="M1232.5,568.2 L1255,568.2" stroke="#ff3030" stroke-width="1"/>
  <path d="M1253.5,565.8 L1259,568.2 L1253.5,570.6 Z" fill="#e02020"/>
  <path d="M1232.7,568.5 L1232.7,548" stroke="#2020ff" stroke-width="1"/>
  <path d="M1230.5,549.5 L1232.7,543.8 L1234.9,549.5 Z" fill="#1818e8"/>
  <text x="1231.6" y="539.1" font-family="Liberation Sans" font-weight="bold" font-size="16.5" fill="#1a1aff">Z</text>
  <text x="1228.6" y="561.7" font-family="Liberation Sans" font-weight="bold" font-size="16.5" fill="#1e9a1e" textLength="10.5" lengthAdjust="spacingAndGlyphs">Y</text>
  <ellipse cx="1229.8" cy="564.3" rx="1.8" ry="1.5" fill="#106810"/>
  <text x="1262.6" y="567.7" font-family="Liberation Sans" font-weight="bold" font-size="16" fill="#ff1414" textLength="11" lengthAdjust="spacingAndGlyphs">X</text>
</g>
</svg>
<svg class="abs" style="left:0;top:0" width="1299" height="584" viewBox="0 0 1299 584">
<defs>
  <pattern id="hatch" width="3.6" height="3.6" patternUnits="userSpaceOnUse" patternTransform="rotate(40)">
    <rect width="3.6" height="3.6" fill="#3a66a0"/><rect width="1.1" height="3.6" fill="#f0f0f0"/>
  </pattern>
  <pattern id="hatchL" width="3.8" height="3.8" patternUnits="userSpaceOnUse" patternTransform="rotate(40)">
    <rect width="3.8" height="3.8" fill="#c6d2e1"/><rect width="1.2" height="3.8" fill="#f0f0f0"/>
  </pattern>
  <pattern id="hatchM" width="3.8" height="3.8" patternUnits="userSpaceOnUse" patternTransform="rotate(40)">
    <rect width="3.8" height="3.8" fill="#4a74aa"/><rect width="1.1" height="3.8" fill="#e8edf3"/>
  </pattern>
</defs>
<!-- icon1 braces -->
<path d="M413.5,13 C411.5,13 411.5,14.5 411.5,17 L411.5,19.5 C411.5,21 410.5,21.5 409.8,21.5 C410.5,21.5 411.5,22 411.5,23.5 L411.5,26 C411.5,28.5 411.5,30 413.5,30" fill="none" stroke="#4e76aa" stroke-width="1"/>
<path d="M426.5,13 C428.5,13 428.5,14.5 428.5,17 L428.5,19.5 C428.5,21 429.5,21.5 430.2,21.5 C429.5,21.5 428.5,22 428.5,23.5 L428.5,26 C428.5,28.5 428.5,30 426.5,30" fill="none" stroke="#4e76aa" stroke-width="1"/>
<g fill="#86a3ca" stroke="#6a8cba" stroke-width="0.6"><circle cx="420" cy="18.2" r="2.7"/><circle cx="416.7" cy="24.2" r="2.8"/><circle cx="423.3" cy="24.2" r="2.8"/></g>
<path d="M435.3,19.3 L441.3,19.3 L438.3,22.8 Z" fill="#111"/>
<!-- icon2 disabled -->
<rect x="414.7" y="37" width="8" height="19" fill="url(#hatchL)"/>
<rect x="427.6" y="37" width="7.6" height="19" fill="url(#hatchL)"/>
<path d="M422.8,45.5 H427 M425.5,44 L427,45.5 L425.5,47" fill="none" stroke="#c9d5e3" stroke-width="1"/>
<!-- icon3 I-beam -->
<rect x="415" y="62" width="19.5" height="5" fill="url(#hatch)"/>
<rect x="421" y="67" width="7" height="10.8" fill="#0f3d7a"/>
<path d="M421,68.5 L428,72 M421,72.5 L428,76" stroke="#7fa0c8" stroke-width="1"/>
<rect x="415" y="77.8" width="19.5" height="5" fill="url(#hatch)"/>
<!-- icon4 waves -->
<path d="M410,94.5 L412.5,92 L415,94.5 L417.5,92 L420,94.5 L422.5,92 L425,94.5 L427.5,92 L429.5,94" fill="none" stroke="#3f6aa3" stroke-width="1"/>
<rect x="410" y="96.4" width="19" height="8.4" fill="url(#hatchM)"/>
<path d="M435.3,96 L441.3,96 L438.3,99.5 Z" fill="#111"/>
<!-- separator -->
<rect x="410" y="112.5" width="31" height="1" fill="#d4d4d4"/>
<!-- icon5 axes -->
<g stroke="#2d5a94" stroke-width="1.6" fill="none"><path d="M419.5,124 V129.5 L414,133 M419.5,129.5 L425,133"/></g>
<g fill="#2d5a94" font-family="Liberation Sans" font-weight="bold" font-size="4.5"><text x="418" y="123.5">Y</text><text x="411.5" y="137">z</text><text x="425.5" y="137">x</text></g>
<path d="M435.3,127.3 L441.3,127.3 L438.3,130.8 Z" fill="#111"/>
<!-- icon6 grid+plus -->
<g fill="#1f4f88">
<rect x="412" y="151" width="2.4" height="2.4"/><rect x="416.5" y="151" width="2.4" height="2.4"/><rect x="421" y="151" width="2.4" height="2.4"/>
<rect x="412" y="155.2" width="2.4" height="2.4"/><rect x="416.5" y="155.2" width="2.4" height="2.4"/><rect x="421" y="155.2" width="2.4" height="2.4"/>
<rect x="412" y="159.4" width="2.4" height="2.4"/><rect x="416.5" y="159.4" width="2.4" height="2.4"/><rect x="421" y="159.4" width="2.4" height="2.4"/>
</g>
<path d="M425.8,145.2 V151.7 M422.4,148.4 H429.3" stroke="#1f4f88" stroke-width="1.6"/>
<path d="M435.3,152.3 L441.3,152.3 L438.3,155.8 Z" fill="#111"/>
<!-- icon7 curve -->
<path d="M416,184 C424,184 431,180 432.5,172" fill="none" stroke="#3f6aa3" stroke-width="1.3"/>
<circle cx="428" cy="181.3" r="2.1" fill="#1f4f88"/>
<!-- separator -->
<rect x="410" y="194" width="31" height="1" fill="#d4d4d4"/>
<!-- icon8 hatch+check -->
<rect x="418.2" y="200" width="8" height="19.6" fill="url(#hatchM)"/>
<path d="M422.8,212.5 L426.8,217 L433.8,209.5" fill="none" stroke="#1f4f88" stroke-width="2.3"/>
<!-- icon9 circle+square -->
<circle cx="422" cy="236.3" r="5.6" fill="none" stroke="#4a74a8" stroke-width="2.4"/>
<rect x="424.2" y="227.3" width="9.4" height="9.4" fill="#f0f0f0" stroke="#1f4f88" stroke-width="1.5"/>
<path d="M426.5,229.5 L431,234 M431,231 V234 H428" fill="none" stroke="#4a74a8" stroke-width="1"/>
<!-- icon10 -->
<path d="M415,252.8 H423 M419,252.8 V261" stroke="#1f4f88" stroke-width="2.2"/>
<circle cx="418.7" cy="267" r="2.3" fill="none" stroke="#1f4f88" stroke-width="1.6"/>
<path d="M424.5,254 H435 M424.5,252 V256 M435,252 V256" stroke="#1f4f88" stroke-width="1.4"/>
<path d="M427,262 L433,260 L427,265 L433,263 L427,268 L433,266 L427,271" fill="none" stroke="#3f6aa3" stroke-width="1.3"/>
</svg>

</body></html>
